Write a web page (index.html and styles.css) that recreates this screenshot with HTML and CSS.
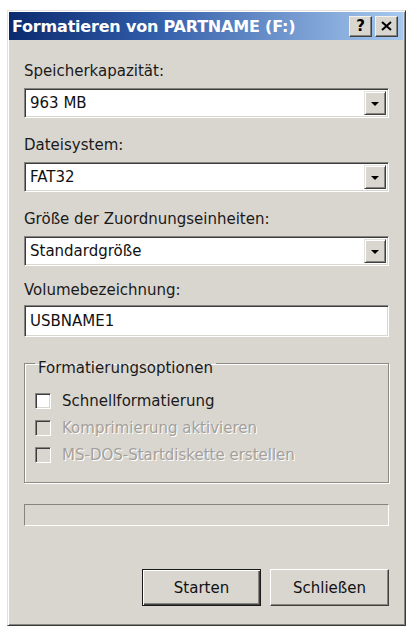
FILE: index.html
```html
<!DOCTYPE html>
<html lang="de">
<head>
<meta charset="utf-8">
<title>Formatieren von PARTNAME (F:)</title>
<link rel="stylesheet" href="styles.css">
</head>
<body>
<div class="window">
  <div class="titlebar">
    <span class="title">Formatieren von PARTNAME (F:)</span>
    <div class="tb-buttons">
      <span class="tb-btn help">?</span>
      <span class="tb-btn close"><svg width="11" height="10" viewBox="0 0 11 10"><path d="M1 1 L10 9 M10 1 L1 9" stroke="#000" stroke-width="2" fill="none"/></svg></span>
    </div>
  </div>
  <div class="content">
    <div class="field">
      <div class="label">Speicherkapazität:</div>
      <div class="combo"><span class="value">963 MB</span><span class="arrow-btn"><span class="tri"></span></span></div>
    </div>
    <div class="field">
      <div class="label">Dateisystem:</div>
      <div class="combo"><span class="value">FAT32</span><span class="arrow-btn"><span class="tri"></span></span></div>
    </div>
    <div class="field">
      <div class="label">Größe der Zuordnungseinheiten:</div>
      <div class="combo"><span class="value">Standardgröße</span><span class="arrow-btn"><span class="tri"></span></span></div>
    </div>
    <div class="field field-last">
      <div class="label">Volumebezeichnung:</div>
      <div class="textbox"><span class="value">USBNAME1</span></div>
    </div>
    <fieldset class="group">
      <legend>Formatierungsoptionen</legend>
      <div class="check"><span class="box"></span><span class="check-label">Schnellformatierung</span></div>
      <div class="check disabled"><span class="box"></span><span class="check-label">Komprimierung aktivieren</span></div>
      <div class="check disabled"><span class="box"></span><span class="check-label">MS-DOS-Startdiskette erstellen</span></div>
    </fieldset>
    <div class="progress"></div>
    <div class="buttons">
      <button class="btn default">Starten</button>
      <button class="btn">Schließen</button>
    </div>
  </div>
</div>
</body>
</html>
```
FILE: styles.css
```css
html, body {
  margin: 0;
  padding: 0;
  background: #ffffff;
}

body {
  font-family: "DejaVu Sans", "Liberation Sans", sans-serif;
  font-size: 15px;
  color: #1a1a1a;
}

.window {
  margin: 10px 0 0 7px;
  width: 399px;
  height: 616px;
  box-sizing: border-box;
  background: #d9d6d0;
  border-top: 1px solid #e4e2dd;
  border-left: 1px solid #e4e2dd;
  border-right: 1px solid #3a3a3a;
  border-bottom: 1px solid #3a3a3a;
  box-shadow: inset 1px 1px #ffffff, inset -1px -1px #86847f;
  padding: 1px 2px 1px 1px;
  display: flex;
  flex-direction: column;
}

.titlebar {
  height: 28px;
  flex: none;
  background: linear-gradient(90deg, #0b2a6e 0%, #2f5aa6 35%, #a7c9ef 100%);
  display: flex;
  align-items: center;
  justify-content: space-between;
  padding: 0 5px 0 3px;
}

.title {
  color: #ffffff;
  font-weight: bold;
  font-size: 16px;
  letter-spacing: -0.2px;
}

.tb-buttons {
  display: flex;
  gap: 3px;
}

.tb-btn {
  width: 23px;
  height: 21px;
  box-sizing: border-box;
  background: #d9d6d0;
  border-top: 1px solid #f2f1ee;
  border-left: 1px solid #f2f1ee;
  border-right: 1px solid #404040;
  border-bottom: 1px solid #404040;
  box-shadow: inset -1px -1px #86847f;
  display: flex;
  align-items: center;
  justify-content: center;
  font-weight: bold;
  font-size: 15px;
  color: #000;
}

.content {
  flex: 1;
  padding: 21px 14px 0 15px;
  display: flex;
  flex-direction: column;
}

.field + .field {
  margin-top: 17px;
}

.field-last {
  margin-top: 14px !important;
}

.label {
  line-height: 20px;
  height: 20px;
  margin-bottom: 7px;
  white-space: nowrap;
}

.field-last .label {
  margin-bottom: 5px;
}

.combo,
.textbox {
  height: 30px;
  box-sizing: border-box;
  background: #ffffff;
  border-top: 1px solid #86847f;
  border-left: 1px solid #86847f;
  border-right: 1px solid #ffffff;
  border-bottom: 1px solid #ffffff;
  box-shadow: inset 1px 1px #3c3c3c, inset -1px -1px #d9d6d0;
  display: flex;
  align-items: center;
  padding: 2px;
}

.textbox {
  height: 32px;
}

.value {
  flex: 1;
  padding-left: 3px;
  color: #111;
}

.arrow-btn {
  width: 22px;
  height: 24px;
  box-sizing: border-box;
  background: #d9d6d0;
  border-top: 1px solid #e4e2dd;
  border-left: 1px solid #e4e2dd;
  border-right: 1px solid #404040;
  border-bottom: 1px solid #404040;
  box-shadow: inset 1px 1px #ffffff, inset -1px -1px #86847f;
  display: flex;
  align-items: center;
  justify-content: center;
}

.tri {
  width: 0;
  height: 0;
  border-left: 4px solid transparent;
  border-right: 4px solid transparent;
  border-top: 4px solid #000;
  margin-top: 1px;
}

.group {
  margin: 11px 0 0 0;
  padding: 9px 10px 14px 10px;
  border: 1px solid #8c8a85;
  box-shadow: inset 1px 1px #ffffff, 1px 1px #ffffff;
  min-width: 0;
}

.group legend {
  padding: 10px 3px 0 3px;
  line-height: 20px;
}

.check {
  height: 27px;
  display: flex;
  align-items: center;
  gap: 11px;
}

.box {
  width: 16px;
  height: 16px;
  box-sizing: border-box;
  background: #ffffff;
  border-top: 1px solid #86847f;
  border-left: 1px solid #86847f;
  border-right: 1px solid #ffffff;
  border-bottom: 1px solid #ffffff;
  box-shadow: inset 1px 1px #3c3c3c, inset -1px -1px #d9d6d0;
}

.check.disabled .box {
  background: #d9d6d0;
}

.check.disabled .check-label {
  color: #a3a09b;
  text-shadow: 1px 1px #ffffff;
}

.progress {
  margin-top: 21px;
  height: 22px;
  box-sizing: border-box;
  border-top: 1px solid #86847f;
  border-left: 1px solid #86847f;
  border-right: 1px solid #ffffff;
  border-bottom: 1px solid #ffffff;
}

.buttons {
  margin-top: 43px;
  display: flex;
  justify-content: flex-end;
  gap: 9px;
}

.btn {
  width: 119px;
  height: 37px;
  box-sizing: border-box;
  font-family: inherit;
  font-size: 15px;
  color: #111;
  background: #d9d6d0;
  border-top: 1px solid #ffffff;
  border-left: 1px solid #ffffff;
  border-right: 1px solid #404040;
  border-bottom: 1px solid #404040;
  box-shadow: inset -1px -1px #86847f;
  padding: 0;
}

.btn.default {
  border: 1px solid #1a1a1a;
  box-shadow: inset 1px 1px #ffffff, inset -1px -1px #404040, inset -2px -2px #86847f;
}
```
